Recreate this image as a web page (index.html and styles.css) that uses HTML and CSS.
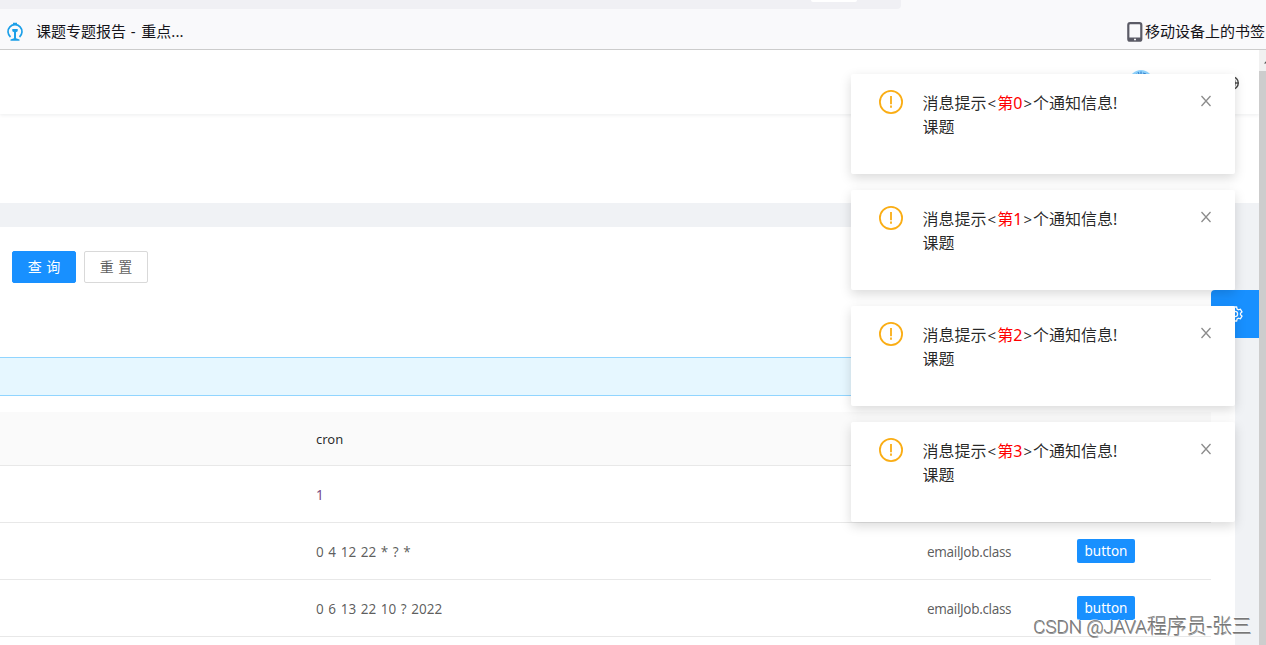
FILE: index.html
```html
<!DOCTYPE html>
<html lang="zh-CN">
<head>
    <meta charset="UTF-8">
    <meta name="viewport" content="width=device-width, initial-scale=1.0">
    <title>定时任务</title>
    <link rel="stylesheet" href="styles.css">
</head>
<body>
    <div class="toolbar">
        <div class="address-bar"><span class="address-pill"></span></div>
        <div class="bookmarks">
            <div class="bookmark">
                <svg class="rail-icon" width="18" height="20" viewBox="0 0 18 20">
                    <path d="M4.500 15A7 7 0 1 1 13.500 15" fill="none" stroke="#1b9fe8" stroke-width="1.700"/>
                    <path d="M7 .8h4v2H7zM6.300 7h5.400v2.200l-1.700 1v6l3.500 1.300v1.200h-9v-1.200L8 16.200v-6l-1.700-1z" fill="#1b9fe8"/>
                </svg>
                <span>课题专题报告<span class="dash"> - </span>重点...</span>
            </div>
            <div class="bookmark mobile">
                <svg width="16" height="20" viewBox="0 0 16 20">
                    <rect x="1.300" y="1.100" width="13" height="17.600" rx="1.800" fill="none" stroke="#5b5b66" stroke-width="2.200"/>
                    <path d="M2 15.500h12v3H2z" fill="#5b5b66"/>
                    <path d="M7 16.800h2v1.400H7z" fill="#f9f9fb"/>
                </svg>
                <span>移动设备上的书签</span>
            </div>
        </div>
    </div>

    <div class="viewport">
        <div class="page">
            <div class="header">
                <span class="avatar">
                    <svg width="24" height="24" viewBox="0 0 24 24">
                        <circle cx="12" cy="12" r="12" fill="#91d5ff"/>
                        <path d="M9 2l1 2M12 1.500v3M6 5l2-1M14 3l3 1" stroke="#3b8ad8" stroke-width="1.200"/>
                    </svg>
                </span>
                <svg class="globe" width="14" height="14" viewBox="0 0 14 14" fill="none" stroke="#444" stroke-width="1.400">
                    <circle cx="7" cy="7" r="6.300"/>
                    <ellipse cx="7" cy="7" rx="3" ry="6.300"/>
                    <path d="M.7 7h12.600"/>
                </svg>
            </div>
            <div class="page-header"></div>
            <div class="card">
                <div class="search">
                    <button class="btn primary">查 询</button>
                    <button class="btn">重 置</button>
                </div>
                <div class="alert"></div>
                <div class="table">
                    <div class="row head">
                        <span class="cron">cron</span>
                    </div>
                    <div class="row">
                        <span class="cron first">1</span>
                    </div>
                    <div class="row">
                        <span class="cron">0 4 12 22 * ? *</span>
                        <span class="job">emailJob.class</span>
                        <button class="btn-small">button</button>
                    </div>
                    <div class="row">
                        <span class="cron">0 6 13 22 10 ? 2022</span>
                        <span class="job">emailJob.class</span>
                        <button class="btn-small">button</button>
                    </div>
                </div>
            </div>
        </div>
        <div class="scrollbar"><svg width="7" height="20" viewBox="0 0 7 20"><path d="M5 13.500l4-4.500v4.500z" fill="#505050"/></svg></div>
    </div>

    <div class="setting">
        <svg width="16" height="16" viewBox="0 0 16 16" fill="none" stroke="#fff" stroke-width="1.300">
            <path d="M6.400 1h3.200l.5 2 1.300.8 2-.6 1.600 2.700-1.500 1.400v1.400l1.500 1.400-1.600 2.700-2-.6-1.300.8-.5 2H6.400l-.5-2-1.300-.8-2 .6L1 10.100l1.500-1.400V7.300L1 5.900l1.600-2.700 2 .6L5.900 3z"/>
            <circle cx="8" cy="8" r="2.600"/>
        </svg>
    </div>

    <div class="notifications">
        <div class="notice">
            <svg class="warn" viewBox="0 0 24 24"><circle cx="12" cy="12" r="11.100"/><path d="M12 6v8.200M12 15.600v2.200"/></svg>
            <div class="text">消息提示<i>&lt;</i><b>第0</b><i>&gt;</i>个通知信息!<br>课题</div>
            <svg class="close" viewBox="0 0 12 12"><path d="M1.500 1l9 10M10.500 1l-9 10"/></svg>
        </div>
        <div class="notice">
            <svg class="warn" viewBox="0 0 24 24"><circle cx="12" cy="12" r="11.100"/><path d="M12 6v8.200M12 15.600v2.200"/></svg>
            <div class="text">消息提示<i>&lt;</i><b>第1</b><i>&gt;</i>个通知信息!<br>课题</div>
            <svg class="close" viewBox="0 0 12 12"><path d="M1.500 1l9 10M10.500 1l-9 10"/></svg>
        </div>
        <div class="notice">
            <svg class="warn" viewBox="0 0 24 24"><circle cx="12" cy="12" r="11.100"/><path d="M12 6v8.200M12 15.600v2.200"/></svg>
            <div class="text">消息提示<i>&lt;</i><b>第2</b><i>&gt;</i>个通知信息!<br>课题</div>
            <svg class="close" viewBox="0 0 12 12"><path d="M1.500 1l9 10M10.500 1l-9 10"/></svg>
        </div>
        <div class="notice">
            <svg class="warn" viewBox="0 0 24 24"><circle cx="12" cy="12" r="11.100"/><path d="M12 6v8.200M12 15.600v2.200"/></svg>
            <div class="text">消息提示<i>&lt;</i><b>第3</b><i>&gt;</i>个通知信息!<br>课题</div>
            <svg class="close" viewBox="0 0 12 12"><path d="M1.500 1l9 10M10.500 1l-9 10"/></svg>
        </div>
    </div>

    <div class="watermark">CSDN @JAVA<span>程序员-张三</span></div>
</body>
</html>
```
FILE: styles.css
```css
* {
    box-sizing: border-box;
}

body {
    margin: 0;
    height: 645px;
    overflow: hidden;
    position: relative;
    display: flex;
    flex-direction: column;
    background: #f0f2f5;
    font-family: "Noto Sans", "Noto Sans CJK SC", sans-serif;
    font-size: 14px;
    color: rgba(0, 0, 0, 0.65);
}

.toolbar {
    height: 50px;
    flex: none;
    background: #f9f9fb;
    border-bottom: 1px solid #ccc;
}

.address-bar {
    width: 901px;
    height: 9px;
    padding-left: 811px;
    background: #f0f0f4;
    border-bottom-right-radius: 4px;
}

.address-pill {
    display: block;
    width: 46px;
    height: 2px;
    background: #fff;
    border-radius: 0 0 4px 4px;
}

.bookmarks {
    height: 40px;
    padding: 3px 1px 0 6px;
    display: flex;
    justify-content: space-between;
}

.bookmark {
    height: 40px;
    display: flex;
    align-items: center;
    gap: 12px;
    font-size: 15px;
    line-height: 20px;
    color: #15141a;
    white-space: nowrap;
}

.bookmark > span {
    padding-bottom: 2px;
}

.dash {
    letter-spacing: 0.9px;
}

.mobile {
    gap: 2px;
}

.viewport {
    flex: 1;
    min-height: 0;
    display: flex;
}

.page {
    flex: 1;
    overflow: hidden;
}

.header {
    height: 64px;
    display: flex;
    justify-content: flex-end;
    align-items: center;
    gap: 72px;
    padding-right: 20px;
    background: #fff;
    position: relative;
    box-shadow: 0 1px 4px rgba(0, 21, 41, 0.08);
}

.avatar,
.avatar svg {
    display: block;
}

.globe {
    margin-top: 2px;
}

.page-header {
    height: 89px;
    background: #fff;
}

.card {
    height: 440px;
    margin: 24px 24px 0 0;
    padding: 24px 24px 0 0;
    background: #fff;
}

.search {
    display: flex;
    gap: 8px;
    padding-left: 12px;
    margin-bottom: 74px;
}

.btn {
    width: 64px;
    height: 32px;
    padding: 0 0 2px;
    background: #fff;
    border: 1px solid #d9d9d9;
    border-radius: 2px;
    font-family: inherit;
    font-size: 14px;
    word-spacing: 0.8px;
    color: rgba(0, 0, 0, 0.65);
}

.btn.primary {
    background: #1890ff;
    border-color: #1890ff;
    color: #fff;
}

.alert {
    height: 39px;
    margin-bottom: 16px;
    background: #e6f7ff;
    border: 1px solid #91d5ff;
    border-left: none;
}

.row {
    height: 57px;
    display: flex;
    align-items: center;
    padding: 1px 0 0 316px;
    border-bottom: 1px solid #e8e8e8;
}

.row.head {
    height: 54px;
    background: #fafafa;
    font-size: 13px;
    color: rgba(0, 0, 0, 0.85);
}

.cron {
    width: 611px;
    font-size: 13.5px;
    word-spacing: 1.1px;
}

.head .cron {
    font-size: 13px;
}

.cron.first {
    color: #7a4a86;
}

.job {
    width: 150px;
    font-size: 13.5px;
    letter-spacing: -0.35px;
}

.btn-small {
    width: 58px;
    height: 24px;
    margin-bottom: 1px;
    padding: 0;
    border: none;
    border-radius: 2px;
    background: #1890ff;
    color: #fff;
    font-family: inherit;
    font-size: 13.5px;
    line-height: 24px;
}

.scrollbar {
    width: 7px;
    background: linear-gradient(#f1f1f1 21px, #cdcdcd 21px);
}

.setting {
    position: absolute;
    top: 290px;
    left: 1211px;
    width: 48px;
    height: 48px;
    display: flex;
    align-items: center;
    justify-content: center;
    background: #1890ff;
    border-radius: 4px 0 0 4px;
}

.notifications {
    position: absolute;
    top: 74px;
    right: 31px;
    width: 384px;
    display: flex;
    flex-direction: column;
    gap: 16px;
}

.notice {
    height: 100px;
    display: flex;
    align-items: flex-start;
    padding: 16px 23px 16px 28px;
    background: #fff;
    border-radius: 2px;
    box-shadow: 0 4px 12px rgba(0, 0, 0, 0.15);
}

.warn {
    width: 24px;
    height: 24px;
    fill: none;
    stroke: #faad14;
    stroke-width: 1.8;
}

.text {
    flex: 1;
    padding: 1px 0 0 19.5px;
    font-size: 16px;
    line-height: 24px;
    color: rgba(0, 0, 0, 0.85);
}

.text b {
    font-weight: normal;
    color: red;
}

.text i {
    display: inline-block;
    width: 10.7px;
    text-align: center;
    font-style: normal;
    font-size: 15px;
}

.close {
    width: 12px;
    height: 12px;
    margin-top: 5px;
    fill: none;
    stroke: #8c8c8c;
    stroke-width: 1.3;
}

.watermark {
    position: absolute;
    left: 1033px;
    top: 613px;
    font-size: 19px;
    line-height: 26px;
    font-family: Roboto, "Noto Sans CJK SC", sans-serif;
    font-weight: 300;
    letter-spacing: -0.2px;
    color: #777;
    text-shadow: -1px -1px 0 rgba(255, 255, 255, 0.6), 0.5px 0.5px 0 #999;
    white-space: nowrap;
}

.watermark span {
    font-size: 20px;
}
```
